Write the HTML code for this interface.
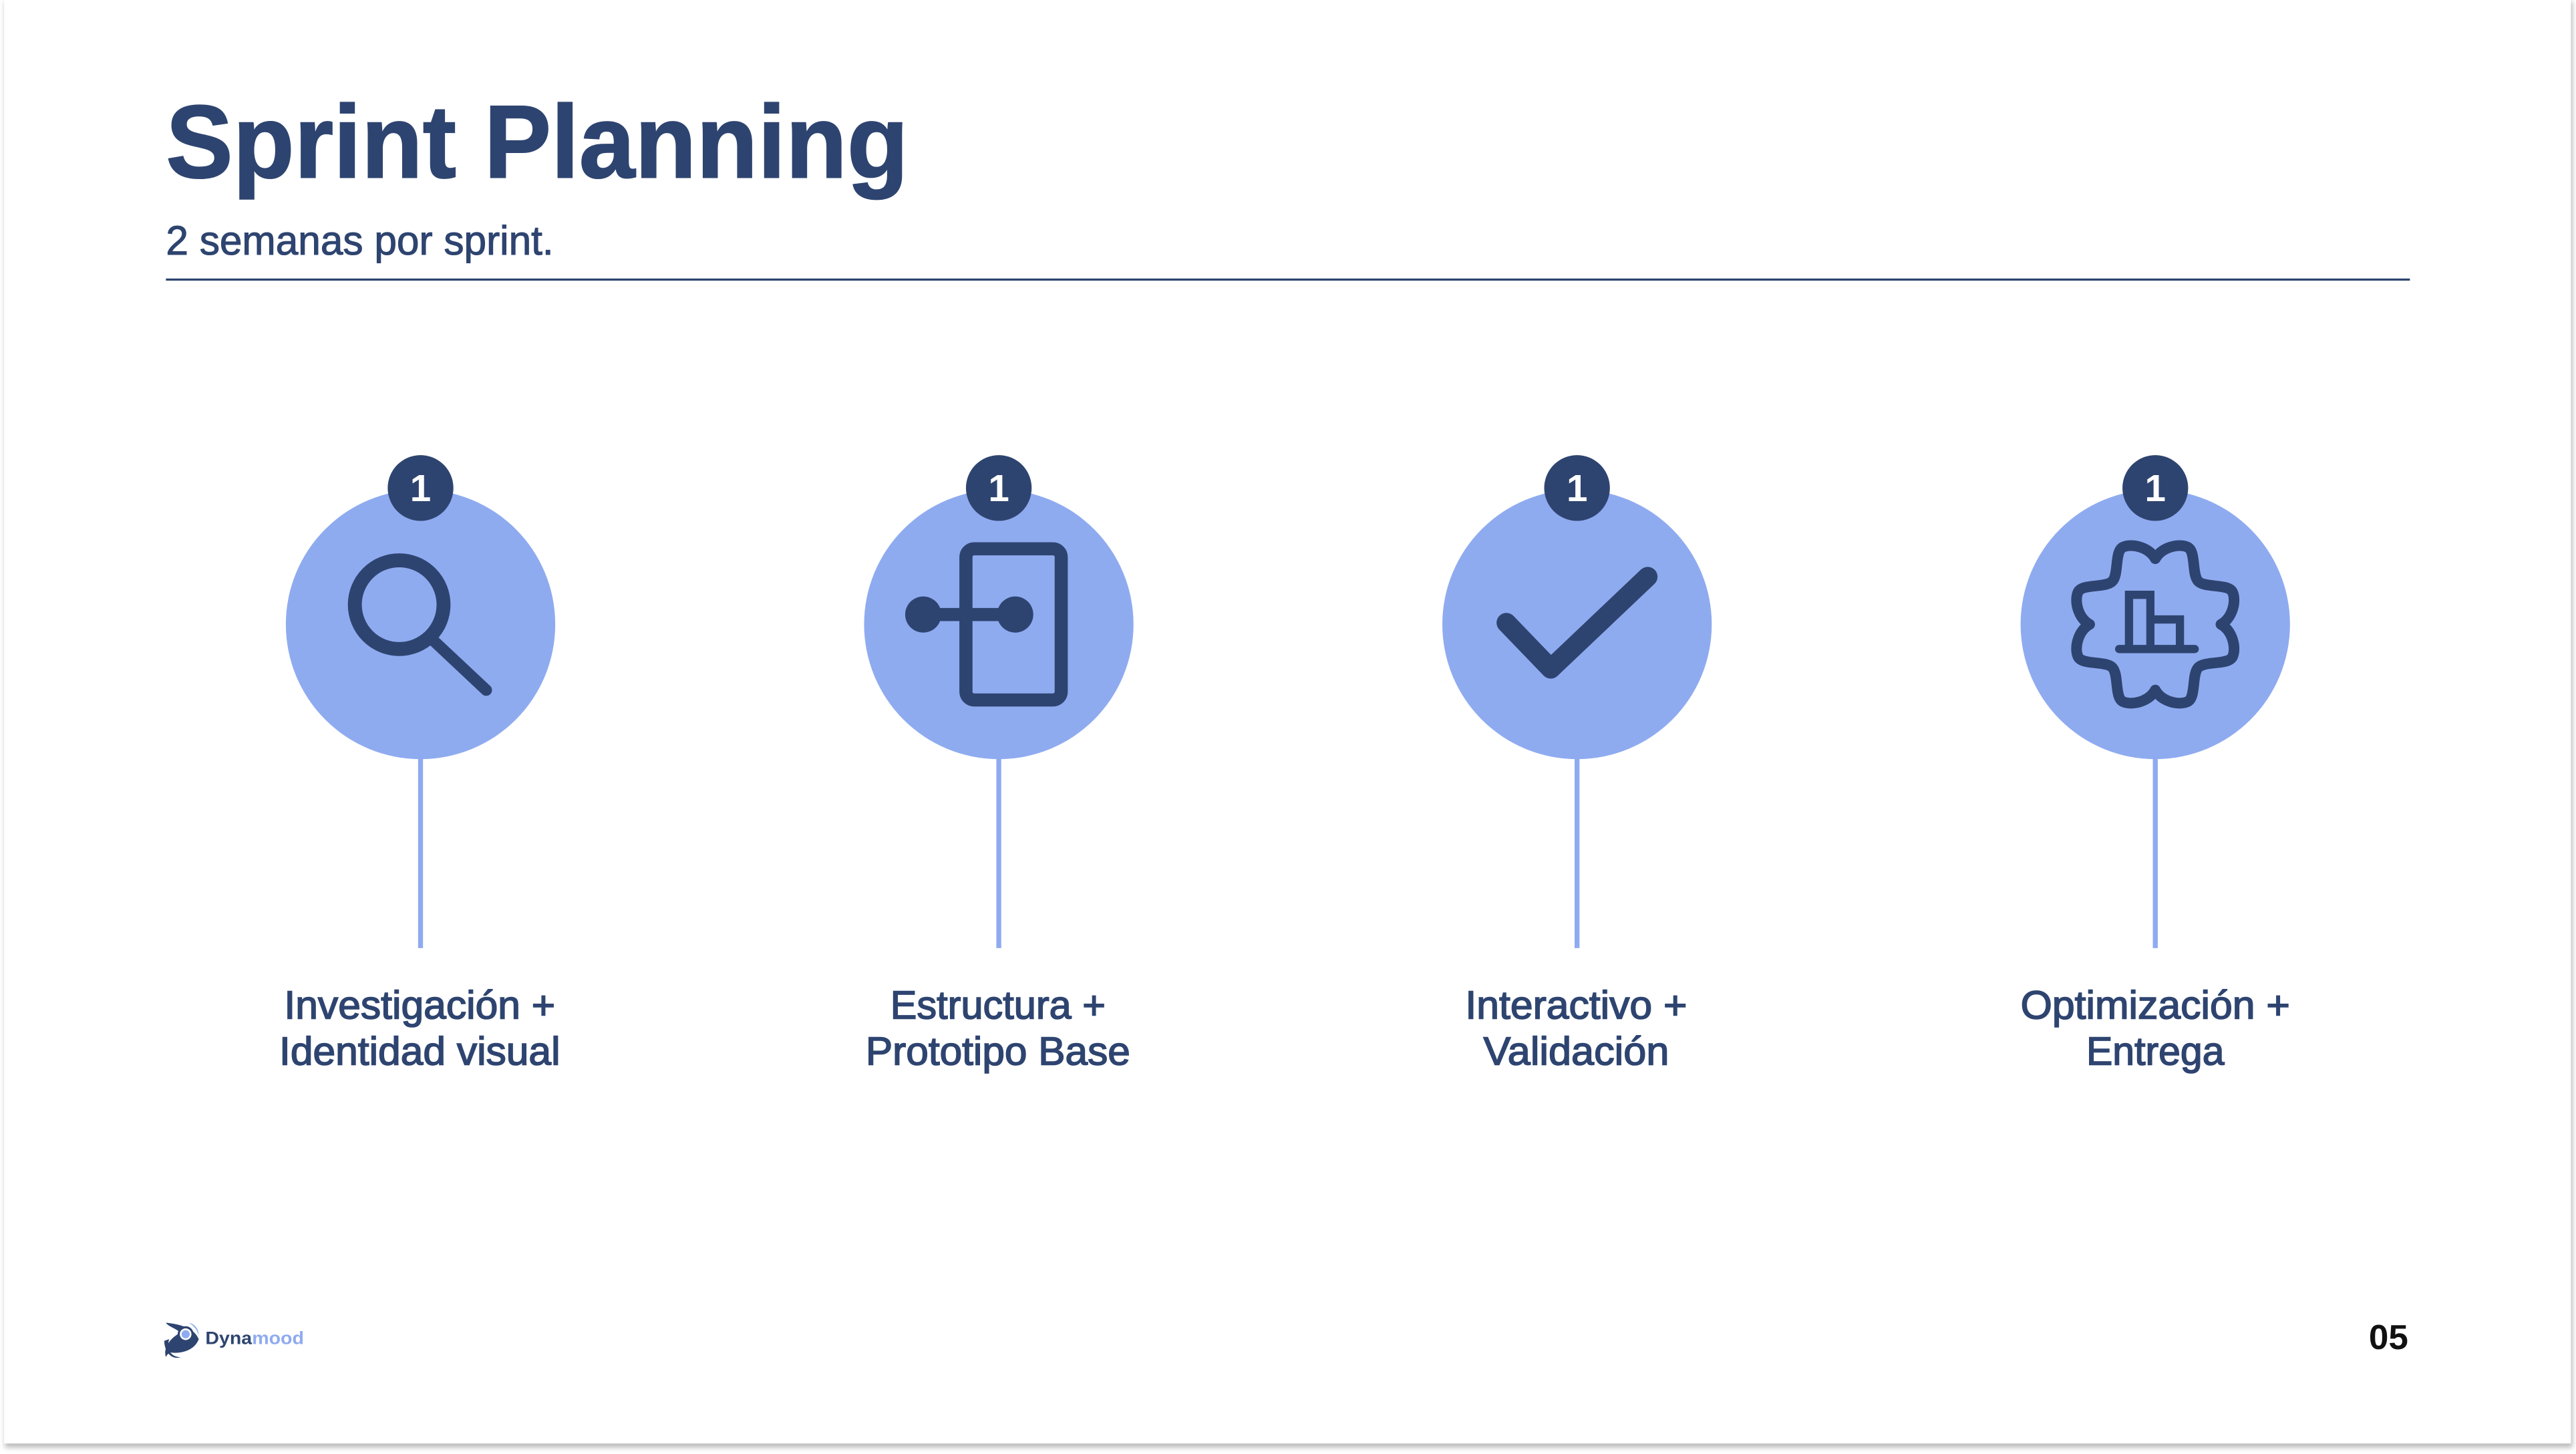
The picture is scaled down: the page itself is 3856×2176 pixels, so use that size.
<!DOCTYPE html>
<html><head><meta charset="utf-8"><style>
html,body{margin:0;padding:0;background:#fff;width:3856px;height:2176px;overflow:hidden}
svg{display:block}
text{font-family:"Liberation Sans",Arial,sans-serif}
</style></head><body>
<svg width="3856" height="2176" viewBox="0 0 1568.1 884.9" xmlns="http://www.w3.org/2000/svg">
<defs><filter id="sh" x="-5%" y="-5%" width="110%" height="110%"><feGaussianBlur stdDeviation="1.5"/></filter>
<path id="quad" d="M0,-40 C4,-47 14,-49.4 19.5,-47.1 C25,-44.8 22,-30.4 26.2,-26.2 C30.4,-22 44.8,-25 47.1,-19.5 C49.4,-14 47,-4 40,0"/></defs>
<rect x="0" y="0" width="1568.1" height="884.9" fill="#fff"/>
<rect x="3" y="1" width="1563" height="880" fill="#bbb" filter="url(#sh)"/>
<rect x="2.5" y="0" width="1562.5" height="878.5" fill="#fff"/>

<text x="101" y="108" font-size="63" font-weight="bold" fill="#2e4470" stroke="#2e4470" stroke-width="0.8" textLength="452" lengthAdjust="spacingAndGlyphs">Sprint Planning</text>
<text x="101" y="155" font-size="25" fill="#2e4470" stroke="#2e4470" stroke-width="0.45" textLength="236" lengthAdjust="spacingAndGlyphs">2 semanas por sprint.</text>
<rect x="101" y="169.5" width="1366" height="1.3" fill="#2e4470"/>

<g fill="#8fabf0">
<circle cx="256" cy="380" r="82"/><circle cx="608" cy="380" r="82"/><circle cx="960" cy="380" r="82"/><circle cx="1312" cy="380" r="82"/>
<rect x="254.5" y="460" width="3" height="117"/><rect x="606.5" y="460" width="3" height="117"/><rect x="958.5" y="460" width="3" height="117"/><rect x="1310.5" y="460" width="3" height="117"/>
</g>
<g fill="#2e4470">
<circle cx="256" cy="297" r="20"/><circle cx="608" cy="297" r="20"/><circle cx="960" cy="297" r="20"/><circle cx="1312" cy="297" r="20"/>
</g>
<g fill="#fff" font-size="23" font-weight="bold" text-anchor="middle">
<text x="256" y="305">1</text><text x="608" y="305">1</text><text x="960" y="305">1</text><text x="1312" y="305">1</text>
</g>

<g stroke="#2e4470" fill="none" stroke-linecap="round" stroke-linejoin="round">
<circle cx="243" cy="368" r="27" stroke-width="8.5"/>
<line x1="264" y1="390" x2="296" y2="420" stroke-width="7"/>
<rect x="588" y="334" width="58" height="92" rx="5" stroke-width="8"/>
<line x1="562" y1="374" x2="618" y2="374" stroke-width="8"/>
<polyline points="917,379 944,407 1003,351" stroke-width="12"/>
<g transform="translate(1312 380)" stroke-width="6.5">
<use href="#quad"/><use href="#quad" transform="rotate(90)"/><use href="#quad" transform="rotate(180)"/><use href="#quad" transform="rotate(270)"/>
</g>
<path d="M1296,393 V362 H1309 V393 M1309,377 H1327 V393" stroke-width="5" stroke-linecap="butt" stroke-linejoin="miter"/>
<line x1="1290" y1="395" x2="1336" y2="395" stroke-width="5"/>
</g>
<g fill="#2e4470"><circle cx="562" cy="374" r="11"/><circle cx="618" cy="374" r="11"/></g>

<g font-size="24" fill="#2e4470" stroke="#2e4470" stroke-width="0.65" text-anchor="start">
<text x="173" y="620" textLength="165" lengthAdjust="spacingAndGlyphs">Investigación +</text>
<text x="170" y="648" textLength="171" lengthAdjust="spacingAndGlyphs">Identidad visual</text>
<text x="542" y="620" textLength="131" lengthAdjust="spacingAndGlyphs">Estructura +</text>
<text x="527" y="648" textLength="161" lengthAdjust="spacingAndGlyphs">Prototipo Base</text>
<text x="892" y="620" textLength="135" lengthAdjust="spacingAndGlyphs">Interactivo +</text>
<text x="903" y="648" textLength="113" lengthAdjust="spacingAndGlyphs">Validación</text>
<text x="1230" y="620" textLength="164" lengthAdjust="spacingAndGlyphs">Optimización +</text>
<text x="1270" y="648" textLength="84" lengthAdjust="spacingAndGlyphs">Entrega</text>
</g>

<text x="1442" y="821" font-size="21" font-weight="bold" fill="#111" textLength="24" lengthAdjust="spacingAndGlyphs">05</text>

<g>
<path d="M101,805 C110,806 118,808 121,815 C118,823 108,824 103,823 C109,820 114,818 116,816 C112,820 102,822 101,826 C99,820 104,814 110,811 C106,808 102,807 101,805 Z" fill="#2e4470"/>
<path d="M100,816 C100,822 104,828 110,826 C104,826 101,821 103,815 Z" fill="#2e4470"/>
<circle cx="113" cy="812" r="4.2" fill="#fff" stroke="#2e4470" stroke-width="1.3"/>
<circle cx="113" cy="812" r="2.5" fill="#8fabf0"/>
<path d="M115,805 C119,806 121,809 121,813 C120,809 118,807 115,805 Z" fill="#8fabf0"/>
<text x="125" y="818" font-size="11" font-weight="bold" fill="#2e4470" textLength="60" lengthAdjust="spacingAndGlyphs">Dyna<tspan fill="#8fabf0">mood</tspan></text>
</g>
</svg>
</body></html>
